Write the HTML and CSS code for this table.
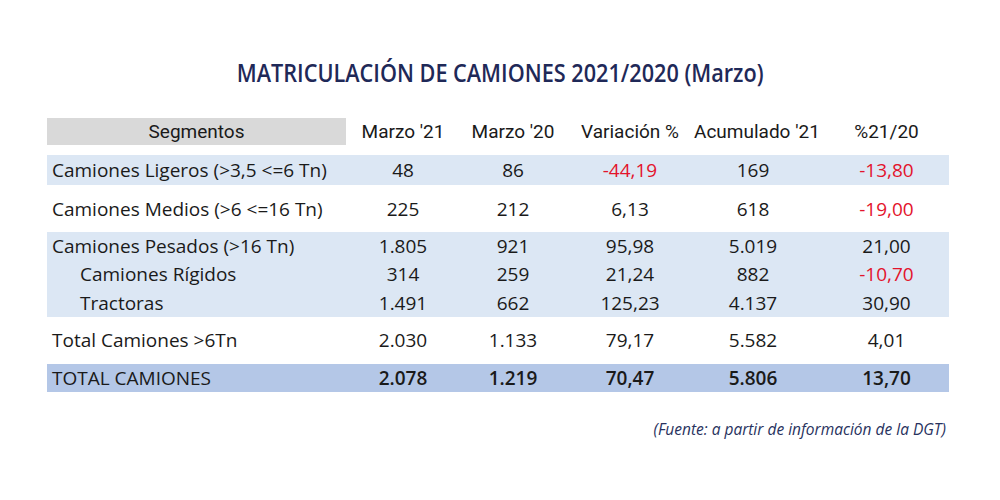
FILE: index.html
```html
<!DOCTYPE html>
<html lang="es">
<head>
<meta charset="utf-8">
<link rel="stylesheet" href="styles.css">
</head>
<body>
<div class="page">
  <h1 class="title"><span class="title-text">MATRICULACIÓN DE CAMIONES 2021/2020 (Marzo)</span></h1>
  <div class="table">
    <div class="row head">
      <div class="cell label seg">Segmentos</div>
      <div class="cell">Marzo '21</div>
      <div class="cell">Marzo '20</div>
      <div class="cell">Variación %</div>
      <div class="cell">Acumulado '21</div>
      <div class="cell c6">%21/20</div>
    </div>
    <div class="row light r1">
      <div class="cell label">Camiones Ligeros (&gt;3,5 &lt;=6 Tn)</div>
      <div class="cell">48</div>
      <div class="cell">86</div>
      <div class="cell neg">-44,19</div>
      <div class="cell">169</div>
      <div class="cell c6 neg">-13,80</div>
    </div>
    <div class="row r2">
      <div class="cell label">Camiones Medios (&gt;6 &lt;=16 Tn)</div>
      <div class="cell">225</div>
      <div class="cell">212</div>
      <div class="cell">6,13</div>
      <div class="cell">618</div>
      <div class="cell c6 neg">-19,00</div>
    </div>
    <div class="group light">
      <div class="row r3">
        <div class="cell label">Camiones Pesados (&gt;16 Tn)</div>
        <div class="cell">1.805</div>
        <div class="cell">921</div>
        <div class="cell">95,98</div>
        <div class="cell">5.019</div>
        <div class="cell c6">21,00</div>
      </div>
      <div class="row r3">
        <div class="cell label sub">Camiones Rígidos</div>
        <div class="cell">314</div>
        <div class="cell">259</div>
        <div class="cell">21,24</div>
        <div class="cell">882</div>
        <div class="cell c6 neg">-10,70</div>
      </div>
      <div class="row r3">
        <div class="cell label sub">Tractoras</div>
        <div class="cell">1.491</div>
        <div class="cell">662</div>
        <div class="cell">125,23</div>
        <div class="cell">4.137</div>
        <div class="cell c6">30,90</div>
      </div>
    </div>
    <div class="row r4">
      <div class="cell label">Total Camiones &gt;6Tn</div>
      <div class="cell">2.030</div>
      <div class="cell">1.133</div>
      <div class="cell">79,17</div>
      <div class="cell">5.582</div>
      <div class="cell c6">4,01</div>
    </div>
    <div class="row total">
      <div class="cell label">TOTAL CAMIONES</div>
      <div class="cell">2.078</div>
      <div class="cell">1.219</div>
      <div class="cell">70,47</div>
      <div class="cell">5.806</div>
      <div class="cell c6">13,70</div>
    </div>
  </div>
  <p class="source">(Fuente: a partir de información de la DGT)</p>
</div>
</body>
</html>
```

FILE: styles.css
```css
html, body {
  margin: 0;
  padding: 0;
  background: #ffffff;
}

.page {
  width: 1000px;
  height: 500px;
  font-family: "Open Sans", "DejaVu Sans", sans-serif;
  color: #1a1a1a;
}

.title {
  margin: 0;
  padding-top: 48px;
  height: 48px;
  line-height: 48px;
  text-align: center;
  font-family: "Open Sans", sans-serif;
  font-weight: 600;
  font-size: 25px;
  color: #1f2958;
}

.title-text {
  display: inline-block;
  transform: scaleX(0.866);
  transform-origin: center;
  white-space: nowrap;
}

.table {
  margin: 22px 0 0 47px;
  width: 902px;
}

.row {
  display: grid;
  grid-template-columns: 299px 114px 106px 128px 118px 137px;
  align-items: center;
  font-size: 19px;
}

.cell {
  text-align: center;
  white-space: nowrap;
}

.c6 {
  padding-left: 12px;
}

.label {
  text-align: left;
  padding-left: 5px;
}

.sub {
  padding-left: 33px;
}

.head {
  height: 27px;
  font-family: "Roboto", sans-serif;
  font-size: 19px;
}

.head .seg {
  background: #d9d9d9;
  height: 27px;
  line-height: 27px;
  text-align: center;
  padding-left: 0;
}

.light {
  background: #dce7f4;
}

.r1 {
  margin-top: 10px;
  height: 30px;
}

.r2 {
  height: 47px;
}

.r3 {
  height: 28.33px;
}

.r4 {
  height: 47px;
}

.total {
  height: 28px;
  background: #b4c7e7;
  font-weight: 600;
}

.total .label {
  font-weight: 400;
}

.neg {
  color: #e3142c;
}

.source {
  margin: 26px 0 0 0;
  width: 946px;
  text-align: right;
  font-style: italic;
  font-size: 15.5px;
  color: #28325e;
}
```
